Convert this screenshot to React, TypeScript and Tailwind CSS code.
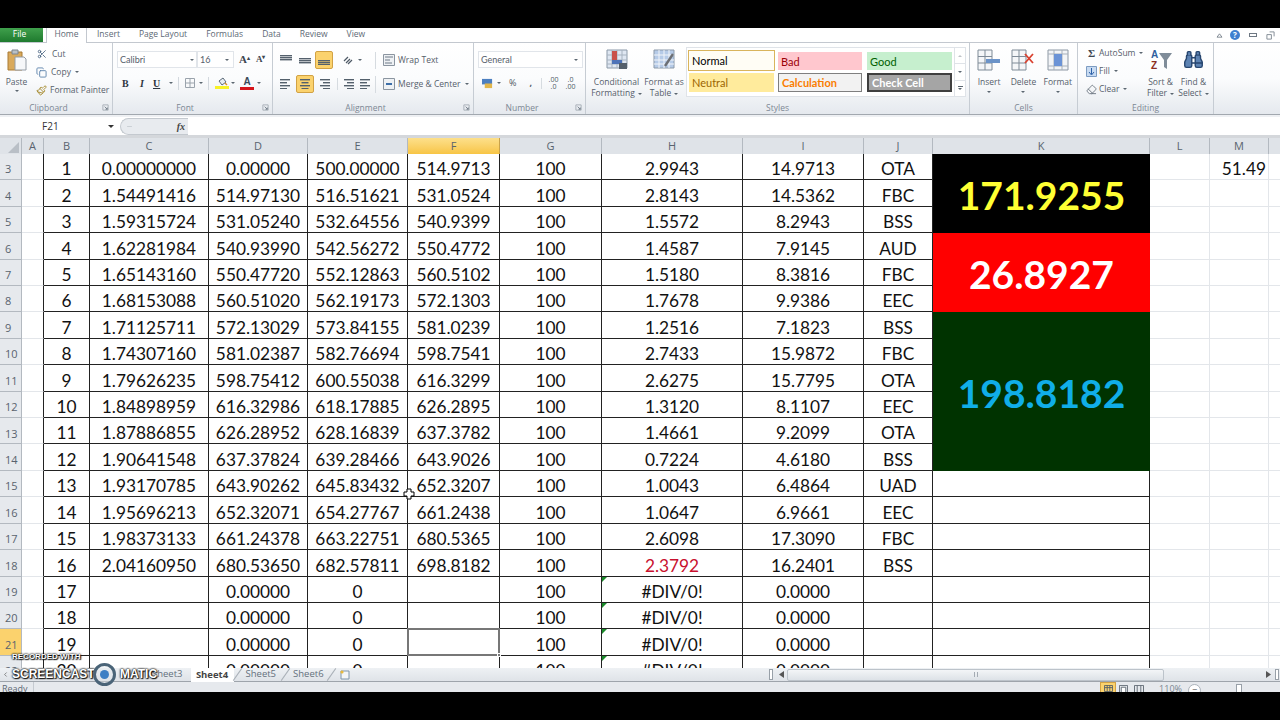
import { Scissors, Copy, Paintbrush, Binoculars, Eraser, ChevronLeft, Minus } from "lucide-react"

const COLS = "grid grid-cols-[22px_22px_46px_119px_99px_100px_92px_102px_141px_121px_69px_217px_60px_59px_12px]"

const rows: string[][] = [
  ["1", "0.00000000", "0.00000", "500.00000", "514.9713", "100", "2.9943", "14.9713", "OTA"],
  ["2", "1.54491416", "514.97130", "516.51621", "531.0524", "100", "2.8143", "14.5362", "FBC"],
  ["3", "1.59315724", "531.05240", "532.64556", "540.9399", "100", "1.5572", "8.2943", "BSS"],
  ["4", "1.62281984", "540.93990", "542.56272", "550.4772", "100", "1.4587", "7.9145", "AUD"],
  ["5", "1.65143160", "550.47720", "552.12863", "560.5102", "100", "1.5180", "8.3816", "FBC"],
  ["6", "1.68153088", "560.51020", "562.19173", "572.1303", "100", "1.7678", "9.9386", "EEC"],
  ["7", "1.71125711", "572.13029", "573.84155", "581.0239", "100", "1.2516", "7.1823", "BSS"],
  ["8", "1.74307160", "581.02387", "582.76694", "598.7541", "100", "2.7433", "15.9872", "FBC"],
  ["9", "1.79626235", "598.75412", "600.55038", "616.3299", "100", "2.6275", "15.7795", "OTA"],
  ["10", "1.84898959", "616.32986", "618.17885", "626.2895", "100", "1.3120", "8.1107", "EEC"],
  ["11", "1.87886855", "626.28952", "628.16839", "637.3782", "100", "1.4661", "9.2099", "OTA"],
  ["12", "1.90641548", "637.37824", "639.28466", "643.9026", "100", "0.7224", "4.6180", "BSS"],
  ["13", "1.93170785", "643.90262", "645.83432", "652.3207", "100", "1.0043", "6.4864", "UAD"],
  ["14", "1.95696213", "652.32071", "654.27767", "661.2438", "100", "1.0647", "6.9661", "EEC"],
  ["15", "1.98373133", "661.24378", "663.22751", "680.5365", "100", "2.6098", "17.3090", "FBC"],
  ["16", "2.04160950", "680.53650", "682.57811", "698.8182", "100", "2.3792", "16.2401", "BSS"],
  ["17", "", "0.00000", "0", "", "100", "#DIV/0!", "0.0000", ""],
  ["18", "", "0.00000", "0", "", "100", "#DIV/0!", "0.0000", ""],
  ["19", "", "0.00000", "0", "", "100", "#DIV/0!", "0.0000", ""],
  ["20", "", "0.00000", "0", "", "100", "#DIV/0!", "0.0000", ""],
]

const tabs = ["Insert", "Page Layout", "Formulas", "Data", "Review", "View"]
const tabGaps = ["ml-[10px]", "ml-[19px]", "ml-[19px]", "ml-[19px]", "ml-[19px]", "ml-[19px]"]

function Caret({ className = "" }: { className?: string }) {
  return <span className={`inline-block w-0 h-0 border-x-[2px] border-x-transparent border-t-[2.5px] border-t-[#5b6670] ${className}`} />
}

function Group({ label, width, launcher, children }: { label: string; width: string; launcher?: boolean; children: React.ReactNode }) {
  return (
    <div className={`flex flex-col h-full border-r border-[#c6ccd3] shrink-0 ${width}`}>
      <div className="h-[58px] flex">{children}</div>
      <div className={`relative h-[13px] text-[8.5px] leading-[13px] text-center text-[#7d8894] ${launcher ? "pr-[15px]" : ""}`}>
        {label}
        {launcher && (
          <svg viewBox="0 0 8 8" className="absolute right-[3px] top-[3px] w-[7px] h-[7px]">
            <path d="M1 1h6v6H1z" fill="none" stroke="#a3abb4" />
            <path d="M3 3l3 3M6 4v2H4" fill="none" stroke="#6f7a86" />
          </svg>
        )}
      </div>
    </div>
  )
}

function AlignIcon({ lines }: { lines: number[][] }) {
  return (
    <svg viewBox="0 0 12 10" className="w-[12px] h-[10px]">
      {lines.map((l, i) => (
        <rect key={i} x={l[0]} y={l[1]} width={l[2]} height="1.4" fill="#54606c" />
      ))}
    </svg>
  )
}

const bar = (y: number) => [[0, y, 12], [0, y + 2, 12], [0, y + 4, 12]]
const left = [[0, 0, 10], [0, 3, 7], [0, 6, 10], [0, 9, 7]]
const center = [[1, 0, 10], [2.5, 3, 7], [1, 6, 10], [2.5, 9, 7]]
const right = [[2, 0, 10], [5, 3, 7], [2, 6, 10], [5, 9, 7]]

function GridIcon({ children }: { children?: React.ReactNode }) {
  return (
    <svg viewBox="0 0 24 22" className="w-[24px] h-[22px]">
      <path d="M1 1h14v20H1zM1 7.5h14M1 14h14M8 1v20" fill="#f4f6f8" stroke="#7f8b97" strokeWidth="1" />
      {children}
    </svg>
  )
}

function BigButton({ width, lines, caretInline, children }: { width: string; lines: string[]; caretInline?: boolean; children: React.ReactNode }) {
  return (
    <div className={`flex flex-col items-center shrink-0 ${width}`}>
      <div className="h-[33px] pt-[6px] flex justify-center">{children}</div>
      {lines.map((l, i) => (
        <div key={l} className="text-[8.5px] leading-[11px] text-[#56606b] whitespace-nowrap">
          {l}
          {caretInline && i === lines.length - 1 && <Caret className="ml-[3px] align-middle" />}
        </div>
      ))}
      {!caretInline && <Caret className="mt-[4px]" />}
    </div>
  )
}

function StyleBox({ className, children }: { className: string; children: string }) {
  return <div className={`flex items-center text-[11px] leading-none pl-[3px] font-['Lato',sans-serif] ${className}`}>{children}</div>
}

function Ribbon() {
  return (
    <div className="h-[72px] flex bg-gradient-to-b from-white via-[#fbfcfd] to-[#e5e9ee] border-b border-[#a2a8af] font-['Open_Sans',sans-serif]">
      <Group label="Clipboard" width="w-[113px]" launcher>
        <div className="w-[32px] flex flex-col items-center pl-[1px] pt-[6px]">
          <svg viewBox="0 0 20 22" className="w-[20px] h-[22px]">
            <path d="M1 3h14v18H1z" fill="#d9a95b" stroke="#a97a34" />
            <path d="M5 1h6v4H5z" fill="#b9c0c7" stroke="#7c858e" />
            <path d="M8 8h9l2 2v11H8z" fill="#f6f7f9" stroke="#949ca5" />
          </svg>
          <span className="text-[8.5px] leading-[11px] mt-[5px] text-[#56606b]">Paste</span>
          <Caret className="mt-[3px]" />
        </div>
        <div className="flex flex-col pl-[3px] pt-[2px] text-[8.5px] leading-[18px] text-[#56606b]">
          <div className="flex items-center gap-[5px]"><Scissors className="w-[10px] h-[10px] ml-[2px] text-[#46617f]" /><span>Cut</span></div>
          <div className="flex items-center gap-[4px]"><Copy className="w-[11px] h-[11px] ml-[1px] text-[#5f84ad]" /><span>Copy</span><Caret /></div>
          <div className="flex items-center gap-[3px]"><Paintbrush className="w-[11px] h-[11px] ml-[1px] text-[#a58a2e]" /><span className="whitespace-nowrap">Format Painter</span></div>
        </div>
      </Group>

      <Group label="Font" width="w-[160px]" launcher>
        <div className="flex flex-col pl-[4px] pt-[8px]">
          <div className="flex items-center h-[17px]">
            <div className="w-[80px] h-[17px] border border-[#e1e5ea] bg-white flex items-center justify-between px-[2px] text-[9px] text-[#56606b] font-['Lato',sans-serif]">Calibri<Caret /></div>
            <div className="w-[37px] h-[17px] border border-[#e1e5ea] bg-white flex items-center justify-between px-[2px] text-[9px] text-[#56606b] font-['Lato',sans-serif]">16<Caret className="mr-[2px]" /></div>
            <span className="ml-[5px] text-[11px] font-bold text-[#3d4650] font-['Liberation_Serif',serif]">A<sup className="text-[6px]">▴</sup></span>
            <span className="ml-[6px] text-[9px] font-bold text-[#3d4650] font-['Liberation_Serif',serif]">A<sup className="text-[6px]">▾</sup></span>
          </div>
          <div className="flex items-center h-[16px] mt-[7px] text-[10px] text-[#2e3640]">
            <span className="ml-[5px] w-[12px] font-bold font-['Liberation_Serif',serif]">B</span>
            <span className="ml-[6px] w-[12px] italic font-bold font-['Liberation_Serif',serif]">I</span>
            <span className="ml-[1px] w-[14px] underline font-bold font-['Liberation_Serif',serif]">U</span>
            <Caret className="ml-[2px]" />
            <span className="ml-[5px] w-px h-[13px] bg-[#d3d8de]" />
            <svg viewBox="0 0 10 10" className="ml-[6px] w-[10px] h-[10px]"><path d="M.5.5h9v9h-9zM5 .5v9M.5 5h9" fill="none" stroke="#9aa3ac" /></svg>
            <Caret className="ml-[4px]" />
            <span className="ml-[5px] w-px h-[13px] bg-[#d3d8de]" />
            <div className="ml-[6px] flex flex-col items-center w-[14px]">
              <svg viewBox="0 0 12 9" className="w-[12px] h-[9px]"><path d="M3 4l4-3 3 4-4 3z" fill="#e8edf2" stroke="#5c6a78" /><path d="M9 6l2 2" stroke="#d88f2c" strokeWidth="1.5" /></svg>
              <span className="w-[14px] h-[3px] bg-[#f8f227]" />
            </div>
            <Caret className="ml-[2px]" />
            <div className="ml-[5px] flex flex-col items-center w-[14px]">
              <span className="text-[10px] leading-[10px] font-bold text-[#3a4a5a] font-['Liberation_Sans',sans-serif]">A</span>
              <span className="w-[14px] h-[3px] bg-[#d5141b]" />
            </div>
            <Caret className="ml-[3px]" />
          </div>
        </div>
      </Group>

      <Group label="Alignment" width="w-[201px]" launcher>
        <div className="flex flex-col pl-[3px] pt-[8px]">
          <div className="flex items-center h-[18px] gap-[1px]">
            <div className="w-[19px] h-[18px] flex items-center justify-center"><AlignIcon lines={bar(0)} /></div>
            <div className="w-[18px] h-[18px] flex items-center justify-center"><AlignIcon lines={bar(3)} /></div>
            <div className="w-[18px] h-[18px] flex items-center justify-center rounded-[2px] border border-[#d2a244] bg-[#fbd26d]"><AlignIcon lines={bar(5)} /></div>
            <svg viewBox="0 0 12 10" className="ml-[9px] w-[12px] h-[10px]"><path d="M1 6l4-4M3 8l4-4M5 9l4-4" stroke="#4e5a66" strokeWidth="1.2" /></svg>
            <Caret className="ml-[2px]" />
            <span className="ml-[12px] w-px h-[17px] bg-[#d6dbe0]" />
            <svg viewBox="0 0 12 12" className="ml-[6px] w-[12px] h-[12px]"><path d="M.5.5h11v11H.5z" fill="#eef1f4" stroke="#8b95a0" /><path d="M2 3h8M2 6h5M2 9h7" stroke="#6f7b88" /></svg>
            <span className="ml-[2px] text-[8.5px] text-[#56606b] whitespace-nowrap">Wrap Text</span>
          </div>
          <div className="flex items-center h-[18px] mt-[6px] gap-[1px]">
            <div className="w-[19px] flex justify-center"><AlignIcon lines={left} /></div>
            <div className="w-[18px] h-[18px] flex items-center justify-center rounded-[2px] border border-[#d2a244] bg-[#fbd26d]"><AlignIcon lines={center} /></div>
            <div className="w-[18px] flex justify-center"><AlignIcon lines={right} /></div>
            <span className="ml-[3px] w-px h-[12px] bg-[#d6dbe0]" />
            <div className="ml-[3px] w-[12px]"><AlignIcon lines={right} /></div>
            <div className="ml-[5px] w-[12px]"><AlignIcon lines={left} /></div>
            <span className="ml-[2px] w-px h-[17px] bg-[#d6dbe0]" />
            <svg viewBox="0 0 12 12" className="ml-[6px] w-[12px] h-[12px]"><path d="M.5.5h11v11H.5z" fill="#eef1f4" stroke="#8b95a0" /><path d="M3 6h6" stroke="#3d6ea8" strokeWidth="2" /></svg>
            <span className="ml-[2px] text-[8.5px] text-[#56606b] whitespace-nowrap">Merge &amp; Center</span>
            <Caret className="ml-[3px]" />
          </div>
        </div>
      </Group>

      <Group label="Number" width="w-[112px]" launcher>
        <div className="flex flex-col pl-[4px] pt-[8px]">
          <div className="w-[105px] h-[17px] border border-[#e1e5ea] bg-white flex items-center justify-between px-[2px] text-[9px] text-[#56606b] font-['Lato',sans-serif]">General<Caret className="mr-[2px]" /></div>
          <div className="flex items-center h-[16px] mt-[7px] text-[9px] text-[#4e5964]">
            <svg viewBox="0 0 12 12" className="ml-[4px] w-[11px] h-[11px]"><rect x="0" y="1" width="11" height="6" fill="#4c7fc0" /><rect x="3" y="6" width="8" height="5" fill="#e2b64a" /></svg>
            <Caret className="ml-[4px]" />
            <span className="ml-[8px]">%</span>
            <span className="ml-[13px] font-bold">,</span>
            <span className="ml-[9px] w-px h-[11px] bg-[#d6dbe0]" />
            <span className="ml-[6px] text-[7px] leading-[7px] w-[11px] text-center">.00<br />.0</span>
            <span className="ml-[6px] text-[7px] leading-[7px] w-[11px] text-center">.0<br />.00</span>
          </div>
        </div>
      </Group>

      <Group label="Styles" width="w-[384px]">
        <div className="flex pl-[7px]">
          <BigButton width="w-[47px]" lines={["Conditional", "Formatting"]} caretInline>
            <svg viewBox="0 0 22 20" className="w-[22px] h-[20px]">
              <path d="M1 1h20v18H1z" fill="#dfe7f2" stroke="#8b99a8" />
              <path d="M1 6h20M1 11h20M1 15h20M6 1v18M11 1v18M16 1v18" stroke="#a7b3c0" fill="none" />
              <rect x="6" y="2" width="5" height="9" fill="#c9504a" />
              <rect x="6" y="11" width="10" height="4" fill="#4e73b8" />
              <rect x="13" y="14" width="8" height="6" fill="#55606c" />
            </svg>
          </BigButton>
          <div className="w-[4px]" />
          <BigButton width="w-[40px]" lines={["Format as", "Table"]} caretInline>
            <svg viewBox="0 0 22 20" className="w-[22px] h-[20px]">
              <path d="M1 1h20v18H1z" fill="#b6cbe8" stroke="#8b99a8" />
              <path d="M1 6h20M1 11h20M1 15h20M6 1v18M11 1v18M16 1v18" stroke="#f2f5f9" fill="none" />
              <path d="M12 17l8-12" stroke="#6c6f74" strokeWidth="2.4" />
            </svg>
          </BigButton>
          <div className="w-[2px]" />
          <div className="mt-[4px] w-[269px] h-[50px] bg-white border border-[#dfe3e8] grid grid-cols-[88px_88px_88px] grid-rows-[24px_23px] pt-[1px] pl-[1px]">
            <StyleBox className="h-[21px] w-[87px] mt-[1px] bg-[#fffdf5] border border-[#d9b45c] text-black">Normal</StyleBox>
            <StyleBox className="h-[18px] w-[84px] mt-[3px] ml-[2px] bg-[#ffc7ce] text-[#9c0006]">Bad</StyleBox>
            <StyleBox className="h-[18px] w-[85px] mt-[3px] ml-[3px] bg-[#c6efce] text-[#006100]">Good</StyleBox>
            <StyleBox className="h-[19px] w-[85px] ml-[1px] bg-[#ffeb9c] text-[#9c6500]">Neutral</StyleBox>
            <StyleBox className="h-[19px] w-[84px] ml-[2px] bg-[#f2f2f2] border border-[#7f7f7f] text-[#fa7d00] font-bold">Calculation</StyleBox>
            <StyleBox className="h-[19px] w-[85px] ml-[3px] bg-[#a5a5a5] border-[2px] border-[#3f3f3f] text-white font-bold">Check Cell</StyleBox>
          </div>
          <div className="mt-[4px] w-[11px] h-[50px] flex flex-col border border-l-0 border-[#dfe3e8] bg-white">
            <div className="flex-1 flex items-center justify-center border-b border-[#dfe3e8]"><Caret className="rotate-180 opacity-40" /></div>
            <div className="flex-1 flex items-center justify-center border-b border-[#dfe3e8]"><Caret /></div>
            <div className="flex-1 flex flex-col items-center justify-center gap-[1px]"><span className="w-[5px] h-px bg-[#5b6670]" /><Caret /></div>
          </div>
        </div>
      </Group>

      <Group label="Cells" width="w-[108px]">
        <div className="flex justify-around w-full px-[2px]">
          <BigButton width="w-[34px]" lines={["Insert"]}>
            <GridIcon><path d="M9 10h14v4H9z" fill="#6b93c8" /></GridIcon>
          </BigButton>
          <BigButton width="w-[34px]" lines={["Delete"]}>
            <GridIcon><path d="M14 5l8 9M22 5l-8 9" stroke="#d9412f" strokeWidth="1.8" /></GridIcon>
          </BigButton>
          <BigButton width="w-[34px]" lines={["Format"]}>
            <svg viewBox="0 0 22 22" className="w-[22px] h-[22px]">
              <path d="M1 1h20v20H1z" fill="#f2f4f7" stroke="#8d98a4" />
              <path d="M7 1v20M15 1v20M1 5h20M1 17h20" stroke="#a7b0ba" />
              <rect x="7" y="5" width="8" height="12" fill="#6b93d6" />
            </svg>
          </BigButton>
        </div>
      </Group>

      <Group label="Editing" width="w-[136px]">
        <div className="flex pl-[8px]">
          <div className="w-[58px] flex flex-col pt-[1px] text-[8.5px] leading-[18px] text-[#56606b]">
            <div className="flex items-center gap-[2px] whitespace-nowrap"><span className="w-[11px] text-[11px] font-bold text-[#3d4650] text-center font-['Liberation_Serif',serif]">Σ</span>AutoSum<Caret className="ml-[2px]" /></div>
            <div className="flex items-center gap-[2px]"><svg viewBox="0 0 11 11" className="w-[11px] h-[11px]"><path d="M.5.5h10v10H.5z" fill="#c8dbf2" stroke="#7d9cc2" /><path d="M5.5 2v6M3 6l2.5 3L8 6" fill="none" stroke="#2d62a8" /></svg>Fill<Caret className="ml-[2px]" /></div>
            <div className="flex items-center gap-[2px]"><Eraser className="w-[11px] h-[11px] text-[#6b7580]" />Clear<Caret className="ml-[2px]" /></div>
          </div>
          <BigButton width="w-[33px]" lines={["Sort &", "Filter"]} caretInline>
            <svg viewBox="0 0 22 22" className="w-[22px] h-[22px]">
              <text x="1" y="9" fontSize="10" fontWeight="700" fill="#2e5f9e" fontFamily="Liberation Sans">A</text>
              <text x="1" y="20" fontSize="10" fontWeight="700" fill="#8d2f22" fontFamily="Liberation Sans">Z</text>
              <path d="M9 4h13l-5 7v9l-3-2v-7z" fill="#7f8c99" />
            </svg>
          </BigButton>
          <BigButton width="w-[33px]" lines={["Find &", "Select"]} caretInline>
            <Binoculars className="w-[21px] h-[21px] text-[#27466f] fill-[#5d83b3]" strokeWidth={1.6} />
          </BigButton>
        </div>
      </Group>

      <div className="flex-1" />
    </div>
  )
}

function MenuBar() {
  return (
    <div className="relative h-[15px] flex items-stretch bg-white border-b border-[#c3c8cf] font-['Open_Sans',sans-serif] text-[8.5px] text-[#5d6975]">
      <div className="w-[43px] pr-[4px] bg-gradient-to-b from-[#3fa04c] to-[#1e7a2e] text-white text-center leading-[12px]">File</div>
      <div className="ml-[3px] w-[41px] h-[15px] bg-white border-x border-[#c3c8cf] text-center leading-[12px] z-10">Home</div>
      {tabs.map((t, i) => (
        <span key={t} className={`${tabGaps[i]} leading-[12px]`}>{t}</span>
      ))}
      <div className="ml-auto flex items-center gap-[7px] pr-[5px]">
        <svg viewBox="0 0 8 6" className="w-[7px] h-[5px]"><path d="M1 5l3-4 3 4z" fill="none" stroke="#6e7883" /></svg>
        <span className="w-[10px] h-[10px] rounded-full bg-[#3f7fd0] text-white text-[8px] leading-[10px] text-center font-bold">?</span>
        <span className="w-[8px] h-[4px] border border-[#6e7883] ml-[2px]" />
        <svg viewBox="0 0 10 10" className="w-[9px] h-[9px] ml-[2px]"><path d="M1 4h5v5H1zM4 1h5v5" fill="none" stroke="#7c8690" /></svg>
      </div>
    </div>
  )
}

function FormulaBar() {
  return (
    <>
      <div className="h-[2px] bg-[#eef0f3]" />
      <div className="h-[18px] flex items-center bg-white">
        <div className="w-[120px] flex items-center justify-between pl-[42px] pr-[6px] text-[10px] text-[#333] font-['Open_Sans',sans-serif]">
          F21
          <span className="w-0 h-0 border-x-[3px] border-x-transparent border-t-[3px] border-t-[#333]" />
        </div>
        <div className="w-[68px] h-[17px] rounded-l-full border border-r-0 border-[#c4c9cf] bg-[#e8ebef] flex items-center justify-between pl-[5px] pr-[3px]">
          <Minus className="w-[7px] h-[7px] text-[#b6bcc3]" />
          <span className="text-[10px] italic font-bold text-[#444] font-['Liberation_Serif',serif]">fx</span>
        </div>
      </div>
      <div className="h-[3px] bg-[#d4d7db]" />
    </>
  )
}

const headCell = "flex items-center justify-center border-r border-[#b3b9c0] bg-[#dfe3e8] text-[11px] text-[#59636e]"

function ColumnHeaders() {
  return (
    <div className={`${COLS} h-[16px] font-['Open_Sans',sans-serif]`}>
      <div className="relative border-r border-[#b3b9c0] bg-[#dfe3e8] overflow-hidden">
        <span className="absolute right-[2px] bottom-[2px] w-0 h-0 border-l-[11px] border-l-transparent border-b-[11px] border-b-[#b9bfc6]" />
      </div>
      {["A", "B", "C", "D", "E"].map((c) => <div key={c} className={headCell}>{c}</div>)}
      <div className="flex items-center justify-center bg-gradient-to-b from-[#fde08a] to-[#f7c33d] border-r border-[#c9a24a] text-[11px] text-[#59636e]">F</div>
      {["G", "H", "I", "J", "K", "L", "M"].map((c) => <div key={c} className={headCell}>{c}</div>)}
      <div className="bg-[#dfe3e8]" />
    </div>
  )
}

const cell = "flex items-end justify-center border-r border-b border-[#222] text-[17.3px] leading-[20px] text-[#111] whitespace-nowrap"
const blankCell = "border-r border-b border-[#e3e6ea]"

function Sheet() {
  return (
    <div className="relative h-[514px] overflow-hidden bg-white font-['Lato',sans-serif]">
      <div className={`${COLS} auto-rows-[26.42px]`}>
        {rows.map((r, i) => {
          const n = i + 3
          return [
            <div key={`h${n}`} className={`flex items-center pl-[5px] pt-[6px] border-r border-b border-[#b3b9c0] text-[11px] text-[#59636e] font-['Open_Sans',sans-serif] ${n === 21 ? "bg-[#fbd26d]" : "bg-[#e6e9ed]"}`}>{n}</div>,
            <div key={`a${n}`} className="border-r border-b border-r-[#222] border-b-[#e3e6ea]" />,
            ...r.map((v, j) => (
              <div key={`${n}-${j}`} className={`relative ${cell} ${v === "2.3792" ? "text-[#c8102e]" : ""}`}>
                {j === 6 && n >= 19 && <span className="absolute left-0 top-0 w-0 h-0 border-r-[5px] border-r-transparent border-t-[5px] border-t-[#1a8a2a]" />}
                {v}
                {j === 4 && n === 21 && (
                  <span className="absolute -inset-px z-10 border-[2px] border-[#777]">
                    <span className="absolute -right-[3px] -bottom-[3px] w-[4px] h-[4px] bg-[#777] border border-white" />
                  </span>
                )}
              </div>
            )),
            n === 3 ? <div key="k3" className="row-span-3 flex items-center justify-center pt-[4px] bg-black text-[#ffff33] text-[39px] font-bold leading-none">171.9255</div> : null,
            n === 6 ? <div key="k6" className="row-span-3 flex items-center justify-center pt-[4px] bg-[#ff0000] text-white text-[39px] font-bold leading-none">26.8927</div> : null,
            n === 9 ? <div key="k9" className="row-span-6 flex items-center justify-center pt-[4px] bg-[#003300] text-[#10aee8] text-[39px] font-bold leading-none">198.8182</div> : null,
            n >= 15 ? <div key={`k${n}`} className={cell} /> : null,
            <div key={`l${n}`} className={blankCell} />,
            <div key={`m${n}`} className={`flex items-end justify-end pr-[2px] text-[17.3px] leading-[20px] text-[#111] ${blankCell}`}>{n === 3 ? "51.49" : ""}</div>,
            <div key={`n${n}`} className="border-b border-[#e3e6ea]" />,
          ]
        })}
      </div>
      <svg viewBox="0 0 12 12" className="absolute left-[403px] top-[334px] w-[12px] h-[12px]">
        <path d="M4 1h4v3h3v4H8v3H4V8H1V4h3z" fill="#fff" stroke="#000" />
      </svg>
    </div>
  )
}

function TabSlash({ className }: { className: string }) {
  return <span className={`w-px h-[15px] bg-[#aab1b8] rotate-[35deg] ${className}`} />
}

function SheetTabs() {
  return (
    <div className="h-[14px] flex items-center bg-gradient-to-b from-[#eef1f4] to-[#dfe3e8] border-b border-[#9ea4ab] font-['Open_Sans',sans-serif] text-[9.5px] text-[#64707c]">
      <div className="w-[147px] pl-[2px]"><ChevronLeft className="w-[7px] h-[7px] text-[#444]" /></div>
      <span className="ml-[5px]">Sheet3</span>
      <span className="ml-[8px] h-[14px] w-[43px] bg-white text-center leading-[13px] font-bold text-[#444]">Sheet4</span>
      <TabSlash className="ml-[3px]" />
      <span className="ml-[8px]">Sheet5</span>
      <TabSlash className="ml-[9px]" />
      <span className="ml-[7px]">Sheet6</span>
      <TabSlash className="ml-[7px]" />
      <svg viewBox="0 0 12 10" className="ml-[7px] w-[12px] h-[10px]"><path d="M2 1h8v8H2z" fill="#f3f5f7" stroke="#7f95aa" /><circle cx="3" cy="2" r="1.6" fill="#e8b93c" /></svg>
      <div className="ml-auto w-[513px] flex items-center h-[12px]">
        <span className="w-[4px] h-[11px] border border-[#98a0a8] bg-white ml-[2px]" />
        <svg viewBox="0 0 5 7" className="ml-[6px] w-[5px] h-[7px]"><path d="M5 0v7L0 3.5z" fill="#555" /></svg>
        <div className="ml-[3px] w-[377px] h-[12px] rounded-[2px] border border-[#bcc3ca] bg-gradient-to-b from-[#f3f5f7] to-[#dde2e7] flex items-center justify-center">
          <span className="w-[4px] h-[5px] border-x border-[#a4abb3]" />
        </div>
        <svg viewBox="0 0 5 7" className="ml-auto w-[5px] h-[7px]"><path d="M0 0v7l5-3.5z" fill="#555" /></svg>
        <span className="ml-[4px] w-[4px] h-[11px] border border-[#98a0a8] bg-white mr-[1px]" />
      </div>
    </div>
  )
}

function StatusBar() {
  return (
    <div className="h-[10px] flex items-start overflow-hidden bg-[#e6e9ed] font-['Open_Sans',sans-serif] text-[9px] leading-[14px] text-[#5f6a75]">
      <span className="pl-[2px] pr-[5px] border-r border-[#c5cad0] h-[10px]">Ready</span>
      <div className="ml-auto flex items-start pr-[38px]">
        <span className="w-[16px] h-[12px] bg-[#fbd26d] border border-[#d2a244] flex items-center justify-center">
          <svg viewBox="0 0 10 8" className="w-[9px] h-[7px]"><path d="M.5.5h9v7h-9zM3.5.5v7M6.5.5v7M.5 3h9" fill="none" stroke="#4e5a66" /></svg>
        </span>
        <svg viewBox="0 0 10 10" className="ml-[3px] mt-[3px] w-[9px] h-[9px]"><path d="M.5.5h9v9h-9z" fill="none" stroke="#5c6670" /><path d="M2.5 2.5h5v7h-5z" fill="#fff" stroke="#5c6670" /></svg>
        <svg viewBox="0 0 12 10" className="ml-[5px] mt-[3px] w-[12px] h-[9px]"><path d="M1 .5v9M4 .5v9M8 .5v9M11 .5v9M1 .5h10" fill="none" stroke="#5c6670" /></svg>
        <span className="ml-[14px] text-[#7b8590]">110%</span>
        <span className="ml-[6px] mt-[2px] w-[13px] h-[13px] rounded-full border border-[#aab2ba] bg-white text-center leading-[10px] text-[#555]">−</span>
        <span className="ml-[35px] mt-[2px] w-[6px] h-[10px] bg-white border border-[#98a0a8]" />
      </div>
    </div>
  )
}

function Watermark() {
  return (
    <div className="absolute left-[12px] top-[652px] font-['Liberation_Sans',sans-serif] font-bold text-white [text-shadow:0_0_2px_#000,0_0_2px_#000,1px_1px_1px_#222]">
      <div className="text-[8px] leading-[9px]">RECORDED WITH</div>
      <div className="mt-[5px] flex items-center text-[12px] leading-[16px]">
        <span className="w-[81px]">SCREENCAST</span>
        <span className="w-[23px] h-[23px] -my-[4px] rounded-full border-[3px] border-[#4a6478] bg-[#dfe6ec]/40 flex items-center justify-center">
          <span className="w-[9px] h-[9px] rounded-full bg-[#3d7fc4]" />
        </span>
        <span className="ml-[4px]">MATIC</span>
      </div>
    </div>
  )
}

export default function App() {
  return (
    <div className="relative w-[1280px] h-[720px] flex flex-col overflow-hidden bg-black">
      <div className="h-[28px] shrink-0" />
      <MenuBar />
      <Ribbon />
      <FormulaBar />
      <ColumnHeaders />
      <Sheet />
      <SheetTabs />
      <StatusBar />
      <Watermark />
    </div>
  )
}
